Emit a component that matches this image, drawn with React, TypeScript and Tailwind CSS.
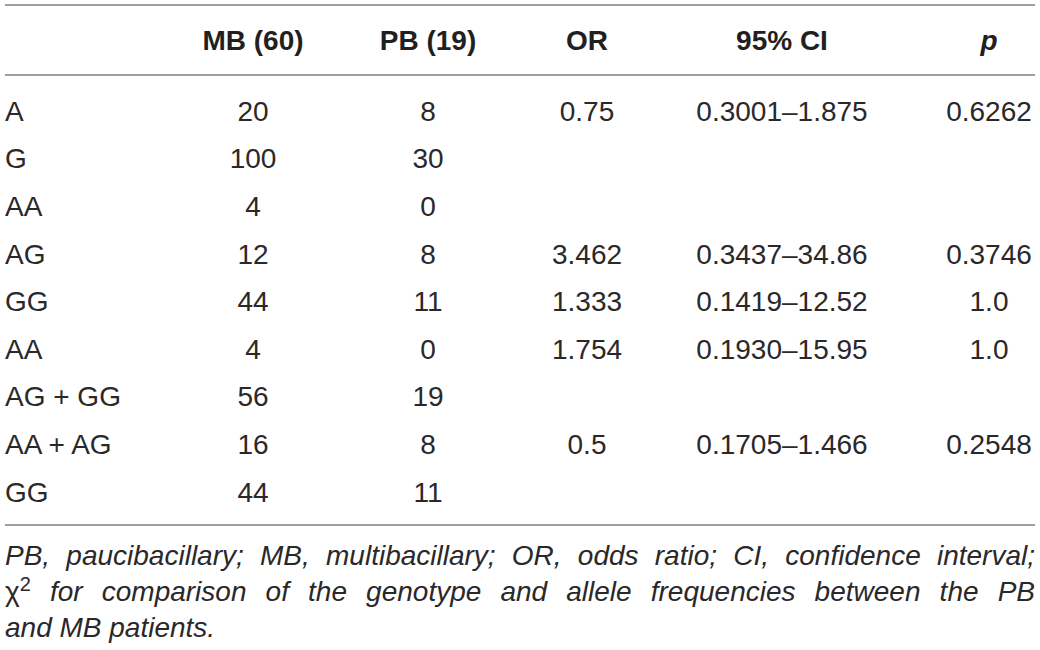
import React from 'react';

type Row = { label: string; mb: string; pb: string; or?: string; ci?: string; p?: string };

const rows: Row[] = [
  { label: 'A', mb: '20', pb: '8', or: '0.75', ci: '0.3001–1.875', p: '0.6262' },
  { label: 'G', mb: '100', pb: '30' },
  { label: 'AA', mb: '4', pb: '0' },
  { label: 'AG', mb: '12', pb: '8', or: '3.462', ci: '0.3437–34.86', p: '0.3746' },
  { label: 'GG', mb: '44', pb: '11', or: '1.333', ci: '0.1419–12.52', p: '1.0' },
  { label: 'AA', mb: '4', pb: '0', or: '1.754', ci: '0.1930–15.95', p: '1.0' },
  { label: 'AG + GG', mb: '56', pb: '19' },
  { label: 'AA + AG', mb: '16', pb: '8', or: '0.5', ci: '0.1705–1.466', p: '0.2548' },
  { label: 'GG', mb: '44', pb: '11' },
];

const cols = 'grid grid-cols-[165px_166px_184px_134px_289px_92px]';

export default function App() {
  return (
    <div
      className="w-[1040px] h-[650px] bg-white px-[5px] pt-[4px] text-[#231f20] overflow-hidden"
      style={{ fontFamily: '"Liberation Sans", Arial, sans-serif' }}
    >
      <div className="border-t-2 border-b-2 border-[#a0a0a0]">
        {/* header */}
        <div className={`${cols} h-[70px] pt-[2px] items-center border-b-2 border-[#a0a0a0] text-[28px] font-bold`}>
          <div />
          <div className="text-center">MB (60)</div>
          <div className="text-center">PB (19)</div>
          <div className="text-center">OR</div>
          <div className="text-center pr-[33px]">95% CI</div>
          <div className="text-center italic">p</div>
        </div>

        {/* body */}
        <div className="pt-[12px] pb-[8px] text-[28px] text-[#2b2829]">
          {rows.map((r, i) => (
            <div key={i} className={`${cols} h-[47.6px] items-center`}>
              <div>{r.label}</div>
              <div className="text-center">{r.mb}</div>
              <div className="text-center">{r.pb}</div>
              <div className="text-center">{r.or}</div>
              <div className="text-center pr-[33px]">{r.ci}</div>
              <div className="text-center">{r.p}</div>
            </div>
          ))}
        </div>
      </div>

      {/* footnote */}
      <div className="mt-[12px] text-[28px] leading-[36px] italic text-[#2b2829]">
        <div className="text-justify [text-align-last:justify]">
          PB, paucibacillary; MB, multibacillary; OR, odds ratio; CI, confidence interval;
        </div>
        <div className="text-justify [text-align-last:justify]">
          <span className="not-italic">χ<sup className="text-[20px]">2</sup></span> for comparison of the genotype and allele frequencies between the PB
        </div>
        <div>and MB patients.</div>
      </div>
    </div>
  );
}
